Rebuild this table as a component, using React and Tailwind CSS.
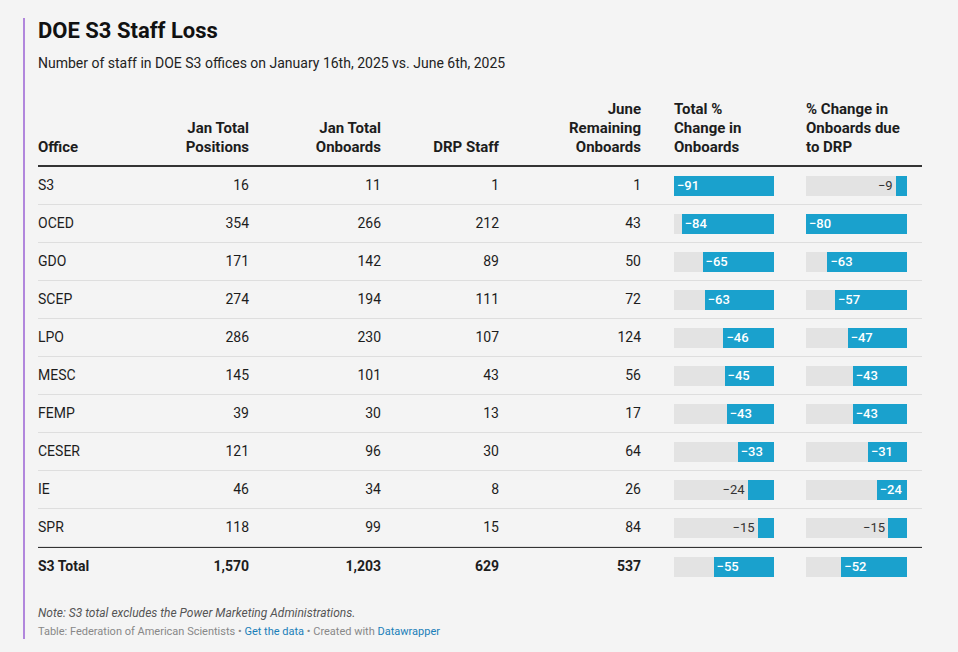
import React from 'react';

const ROWS = [
  { office: 'S3', pos: '16', onb: '11', drp: '1', june: '1', total: -91, due: -9 },
  { office: 'OCED', pos: '354', onb: '266', drp: '212', june: '43', total: -84, due: -80 },
  { office: 'GDO', pos: '171', onb: '142', drp: '89', june: '50', total: -65, due: -63 },
  { office: 'SCEP', pos: '274', onb: '194', drp: '111', june: '72', total: -63, due: -57 },
  { office: 'LPO', pos: '286', onb: '230', drp: '107', june: '124', total: -46, due: -47 },
  { office: 'MESC', pos: '145', onb: '101', drp: '43', june: '56', total: -45, due: -43 },
  { office: 'FEMP', pos: '39', onb: '30', drp: '13', june: '17', total: -43, due: -43 },
  { office: 'CESER', pos: '121', onb: '96', drp: '30', june: '64', total: -33, due: -31 },
  { office: 'IE', pos: '46', onb: '34', drp: '8', june: '26', total: -24, due: -24 },
  { office: 'SPR', pos: '118', onb: '99', drp: '15', june: '84', total: -15, due: -15 },
];

const TOTAL = { office: 'S3 Total', pos: '1,570', onb: '1,203', drp: '629', june: '537', total: -55, due: -52 };

// bars are scaled to the largest value in each column
const Bar = ({ value, max, width }) => {
  const w = (Math.abs(value) / max) * width;
  const inside = w >= 28;
  const label = '\u2212' + Math.abs(value);
  return (
    <div className="flex h-5 justify-end bg-[#e3e3e3]" style={{ width }}>
      {!inside && (
        <span className="flex items-center pr-[3px] text-[13px] text-[#333]">{label}</span>
      )}
      <div className="flex h-full items-center bg-[#1aa1cd]" style={{ width: w }}>
        {inside && <span className="pl-[3px] text-[13px] font-medium text-white">{label}</span>}
      </div>
    </div>
  );
};

const Row = ({ r, bold }) => (
  <div
    className={`flex h-[38px] items-center text-[14px] text-[#1d1d1d] ${
      bold ? 'font-bold border-t border-[#333]' : 'border-b border-[#dedede]'
    }`}
  >
    <div className="w-[100px]">{r.office}</div>
    <div className="w-[111px] text-right">{r.pos}</div>
    <div className="w-[132px] text-right">{r.onb}</div>
    <div className="w-[118px] text-right">{r.drp}</div>
    <div className="w-[142px] text-right">{r.june}</div>
    <div className="w-[165px] pl-[33px] font-normal">
      <Bar value={r.total} max={91} width={100} />
    </div>
    <div className="w-[116px] font-normal">
      <Bar value={r.due} max={80} width={101} />
    </div>
  </div>
);

export default function App() {
  return (
    <div
      className="min-h-[652px] w-[958px] bg-[#f4f4f4] pt-[18px] pb-[13px]"
      style={{ fontFamily: 'Roboto, "Liberation Sans", sans-serif' }}
    >
      <div className="ml-[23px] mr-[36px] border-l-2 border-[#b186dc] pl-[13px]">
        <h1 className="text-[22px] font-bold leading-[26px] text-[#111]">DOE S3 Staff Loss</h1>
        <p className="mt-[10px] text-[14px] leading-[18px] text-[#222]">
          Number of staff in DOE S3 offices on January 16th, 2025 vs. June 6th, 2025
        </p>

        <div className="mt-[28px]">
          {/* header */}
          <div className="flex items-end border-b-2 border-[#333] pb-[8px] text-[15px] font-bold leading-[19px] text-[#1d1d1d]">
            <div className="w-[100px]">Office</div>
            <div className="w-[111px] text-right">Jan Total<br />Positions</div>
            <div className="w-[132px] text-right">Jan Total<br />Onboards</div>
            <div className="w-[118px] text-right">DRP Staff</div>
            <div className="w-[142px] text-right">June<br />Remaining<br />Onboards</div>
            <div className="w-[165px] pl-[33px]">Total %<br />Change in<br />Onboards</div>
            <div className="w-[116px]">% Change in<br />Onboards due<br />to DRP</div>
          </div>

          {ROWS.map((r) => (
            <Row key={r.office} r={r} />
          ))}
          <Row r={TOTAL} bold />
        </div>

        <p className="mt-[20px] text-[12px] italic leading-[16px] text-[#555]">
          Note: S3 total excludes the Power Marketing Administrations.
        </p>
        <p className="mt-[4px] text-[11px] leading-[14px] text-[#888]">
          Table: Federation of American Scientists •{' '}
          <span className="text-[#1a7fb9]">Get the data</span> • Created with{' '}
          <span className="text-[#1a7fb9]">Datawrapper</span>
        </p>
      </div>
    </div>
  );
}
